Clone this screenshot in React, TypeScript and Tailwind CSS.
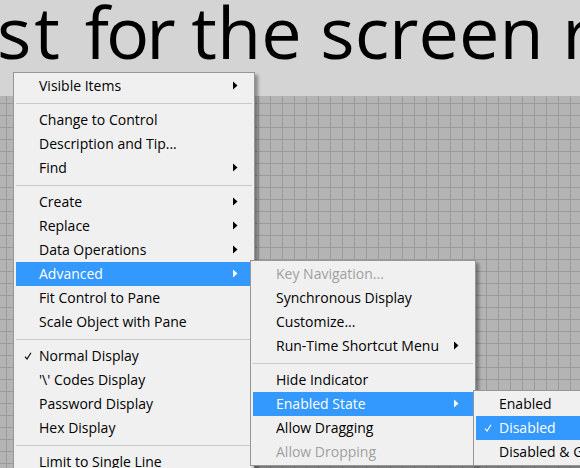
import React from 'react'

type Item =
  | { sep: true }
  | {
      sep?: false
      label: string
      arrow?: boolean
      check?: boolean
      disabled?: boolean
      active?: boolean
    }

const mainItems: Item[] = [
  { label: 'Visible Items', arrow: true },
  { sep: true },
  { label: 'Change to Control' },
  { label: 'Description and Tip...' },
  { label: 'Find', arrow: true },
  { sep: true },
  { label: 'Create', arrow: true },
  { label: 'Replace', arrow: true },
  { label: 'Data Operations', arrow: true },
  { label: 'Advanced', arrow: true, active: true },
  { label: 'Fit Control to Pane' },
  { label: 'Scale Object with Pane' },
  { sep: true },
  { label: 'Normal Display', check: true },
  { label: "'\\' Codes Display" },
  { label: 'Password Display' },
  { label: 'Hex Display' },
  { sep: true },
  { label: 'Limit to Single Line' },
]

const advancedItems: Item[] = [
  { label: 'Key Navigation...', disabled: true },
  { label: 'Synchronous Display' },
  { label: 'Customize...' },
  { label: 'Run-Time Shortcut Menu', arrow: true },
  { sep: true },
  { label: 'Hide Indicator' },
  { label: 'Enabled State', arrow: true, active: true },
  { label: 'Allow Dragging' },
  { label: 'Allow Dropping', disabled: true },
]

const stateItems: Item[] = [
  { label: 'Enabled' },
  { label: 'Disabled', check: true, active: true },
  { label: 'Disabled & Grayed' },
]

function Check({ white }: { white?: boolean }) {
  return (
    <svg width="8" height="8" viewBox="0 0 8 8" className="block">
      <path
        d="M1 4.6 L3 7 L7 0.8"
        fill="none"
        stroke={white ? '#ffffff' : '#000000'}
        strokeWidth="1.1"
      />
    </svg>
  )
}

function Arrow({ white }: { white?: boolean }) {
  return (
    <svg width="5" height="9" viewBox="0 0 5 9" className="block">
      <path d="M0 0.5 L4.5 4.5 L0 8.5 Z" fill={white ? '#ffffff' : '#000000'} />
    </svg>
  )
}

function Menu({ items, className }: { items: Item[]; className: string }) {
  return (
    <div
      className={
        'absolute flex flex-col border border-[#979797] bg-[#f0f0f0] px-[2px] py-[1px] shadow-[3px_3px_3px_rgba(0,0,0,0.35)] ' +
        className
      }
    >
      {items.map((it, i) => {
        if (it.sep) {
          return (
            <div key={i} className="flex h-[10px] items-center">
              <div className="h-px w-full bg-[#c8c8c8]" />
            </div>
          )
        }
        return (
          <div
            key={i}
            className={
              'flex h-[24px] shrink-0 items-center whitespace-nowrap pb-[2px] ' +
              (it.active
                ? 'bg-[#3399ff] text-white'
                : it.disabled
                  ? 'text-[#a0a0a0]'
                  : 'text-black')
            }
          >
            <span className="flex w-[23px] shrink-0 justify-center pl-[1px] pt-[1px]">
              {it.check && <Check white={it.active} />}
            </span>
            <span className="flex-1">{it.label}</span>
            <span className="flex w-[20px] shrink-0 justify-start pl-[1px] pt-[1px]">
              {it.arrow && <Arrow white={it.active} />}
            </span>
          </div>
        )
      })}
    </div>
  )
}

export default function App() {
  return (
    <div className="relative h-[468px] w-[580px] overflow-hidden bg-[#d4d4d4] font-['Open_Sans',sans-serif] text-[14px]">
      <div className="h-[96px] overflow-hidden">
        <div className="-ml-[3px] -mt-[5px] whitespace-nowrap text-[72px] leading-[72px] text-black">
          <span className="tracking-[3px]">st </span>
          <span className="tracking-[-3px]">for</span> the screen re
        </div>
      </div>
      <div className="h-[372px] bg-[#b4b4b4] bg-[linear-gradient(to_right,#9a9a9a_1px,transparent_1px),linear-gradient(to_bottom,#9a9a9a_1px,transparent_1px)] bg-[size:12px_12px] bg-[position:6px_7px]" />

      <Menu items={mainItems} className="left-[13px] top-[72px] w-[242px]" />
      <Menu items={advancedItems} className="left-[250px] top-[260px] w-[226px]" />
      <Menu items={stateItems} className="left-[473px] top-[390px] w-[160px]" />
    </div>
  )
}
